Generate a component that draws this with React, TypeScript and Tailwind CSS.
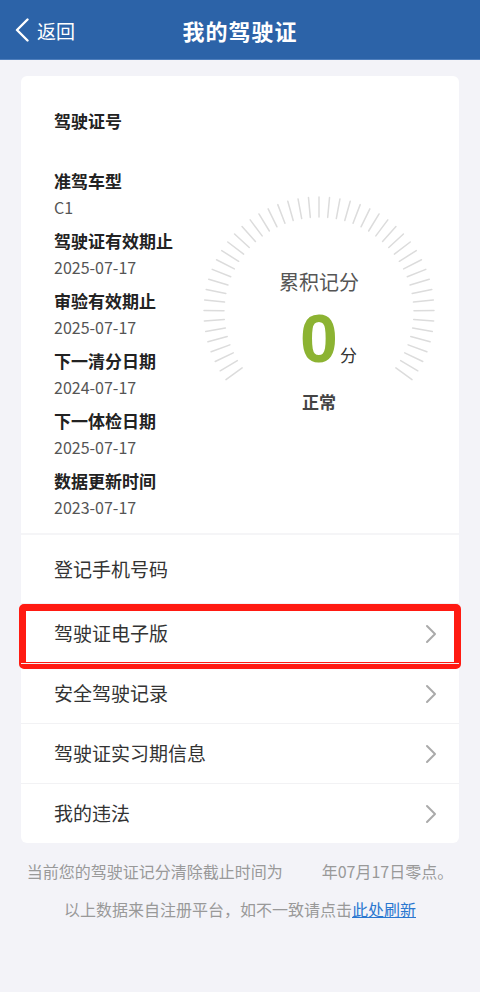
import React from 'react';

const fontStack = '"Noto Sans CJK SC", "Noto Sans", sans-serif';

// licence fields shown in the left column
const fields = [
  { label: '准驾车型', value: 'C1' },
  { label: '驾驶证有效期止', value: '2025-07-17' },
  { label: '审验有效期止', value: '2025-07-17' },
  { label: '下一清分日期', value: '2024-07-17' },
  { label: '下一体检日期', value: '2025-07-17' },
  { label: '数据更新时间', value: '2023-07-17' },
];

const menu = ['驾驶证电子版', '安全驾驶记录', '驾驶证实习期信息', '我的违法'];

function Gauge() {
  const count = 49;
  const span = 252;
  const ticks = Array.from({ length: count }, (_, i) => {
    const deg = -span / 2 + (span / (count - 1)) * i;
    const rad = (deg * Math.PI) / 180;
    const sx = Math.sin(rad);
    const sy = -Math.cos(rad);
    return (
      <line
        key={i}
        x1={120 + sx * 95}
        y1={120 + sy * 95}
        x2={120 + sx * 115}
        y2={120 + sy * 115}
        stroke="#dcdcdc"
        strokeWidth={1.5}
        strokeLinecap="round"
      />
    );
  });

  return (
    <div className="relative w-[240px] h-[240px]">
      <svg className="absolute inset-0" width="240" height="240" viewBox="0 0 240 240">
        {ticks}
      </svg>
      <div className="relative flex flex-col items-center pt-[76px]">
        <div className="text-[20px] leading-[28px] text-[#555]">累积记分</div>
        <div className="flex items-baseline pl-[19px] mt-[8px]">
          <span
            className="text-[68px] leading-[68px] font-bold text-[#8cb332]"
            style={{ fontFamily: '"Liberation Sans", Arial, sans-serif' }}
          >
            0
          </span>
          <span className="ml-[2px] text-[17px] text-[#333]">分</span>
        </div>
        <div className="mt-[18px] text-[17px] leading-[24px] font-bold text-[#444]">正常</div>
      </div>
    </div>
  );
}

function Chevron() {
  return (
    <svg width="12" height="20" viewBox="0 0 12 20" fill="none">
      <path d="M2 2l8 8-8 8" stroke="#aaaaaa" strokeWidth="2" strokeLinecap="round" strokeLinejoin="round" />
    </svg>
  );
}

export default function App() {
  return (
    <div className="min-h-[992px] bg-[#f3f3f8]" style={{ fontFamily: fontStack }}>
      {/* header */}
      <div className="relative h-[60px] bg-[#2c63a8] border-b border-[#4f7fbd] flex items-center justify-center">
        <div className="absolute left-[14px] top-0 h-[60px] flex items-center text-white">
          <svg width="16" height="24" viewBox="0 0 16 24" fill="none">
            <path d="M13.5 1.5L3 12l10.5 10.5" stroke="white" strokeWidth="2.4" strokeLinecap="round" strokeLinejoin="round" />
          </svg>
          <span className="ml-[7px] text-[19px] leading-none">返回</span>
        </div>
        <h1 className="text-white text-[22px] font-bold leading-none tracking-[1px]">我的驾驶证</h1>
      </div>

      {/* card */}
      <div className="mx-[21px] mt-[16px] bg-white rounded-[6px]">
        <div className="flex border-b-2 border-[#f5f5f7]">
          <div className="pl-[33px] pt-[35px] pb-[16px]">
            <div className="text-[17px] leading-[20px] font-bold text-[#222]">驾驶证号</div>
            <div className="mt-[40px] flex flex-col gap-[14px]">
              {fields.map((f) => (
                <div key={f.label}>
                  <div className="text-[17px] leading-[20px] font-bold text-[#222]">{f.label}</div>
                  <div className="mt-[6px] text-[16px] leading-[20px] text-[#555]">{f.value}</div>
                </div>
              ))}
            </div>
          </div>
          <div className="ml-auto mr-[20px] mt-[116px]">
            <Gauge />
          </div>
        </div>

        <div className="h-[68px] flex items-center pl-[33px] text-[19px] text-[#333]">登记手机号码</div>

        {menu.map((item, i) => (
          <div
            key={item}
            className="relative h-[60px] flex items-center justify-between pl-[33px] pr-[22px] border-t border-[#f2f2f4] text-[19px] text-[#333]"
          >
            <span>{item}</span>
            <Chevron />
            {i === 0 && (
              <div className="absolute -left-[2px] -right-[2px] top-0 -bottom-[6px] border-[7px] border-[#ff1a12] rounded-[5px] pointer-events-none" />
            )}
          </div>
        ))}
      </div>

      {/* footer notes */}
      <div className="mt-[17px] text-center text-[16px] leading-[22px] text-[#999]">
        当前您的驾驶证记分清除截止时间为<span className="inline-block w-[39px]" />年07月17日零点。
      </div>
      <div className="mt-[16px] text-center text-[16px] leading-[22px] text-[#999]">
        以上数据来自注册平台，如不一致请点击<span className="text-[#2a77d0] underline">此处刷新</span>
      </div>
    </div>
  );
}
